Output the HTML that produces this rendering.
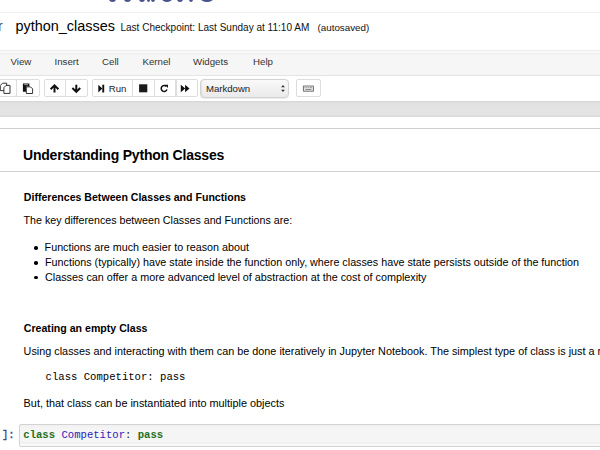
<!DOCTYPE html>
<html><head><meta charset="utf-8">
<style>
*{margin:0;padding:0;box-sizing:border-box}
html,body{width:600px;height:450px;overflow:hidden;background:#fff;font-family:"Liberation Sans",sans-serif;color:#000}
.a{position:absolute;white-space:pre;line-height:20px}
.blob{position:absolute;background:#34407f;border-radius:50%;opacity:.9}
#topline{position:absolute;left:0;top:12px;width:600px;height:1px;background:#f2f2f2}
#menubar{position:absolute;left:0;top:50px;width:600px;height:25.5px;background:#f6f6f6;border-top:1.5px solid #ebebeb;border-bottom:1.5px solid #e4e4e4;box-shadow:inset 0 2px 0 #f9f9f9,inset 0 3.5px 0 #eeeeee}
.menu{font-size:9.7px;color:#333}
.btn{position:absolute;top:79px;height:18px;border:1px solid #ddd;background:#fff}
#band{position:absolute;left:0;top:101px;width:600px;height:16px;background:linear-gradient(#d6d6d6,#e2e2e2 15%,#e4e4e4 85%,#d8d8d8)}
#line2{position:absolute;left:0;top:128px;width:600px;height:1px;background:#cfcfcf}
#line3{position:absolute;left:0;top:171px;width:600px;height:1px;background:#d0d0d0}
.body{font-size:10.75px}
.mono{font-family:"Liberation Mono",monospace;font-size:10.6px}
.bullet{position:absolute;width:3.6px;height:3.6px;border-radius:50%;background:#000}
#sel{position:absolute;left:200px;top:79.2px;width:89px;height:18.4px;border:1px solid #d2d2d2;border-radius:4px;background:linear-gradient(#f9f9f9,#eaeaea);box-shadow:inset 2px 0 2px -1px rgba(0,0,0,.07),0 0.5px 1px rgba(0,0,0,.08)}
#cell{position:absolute;left:19px;top:424.4px;width:590px;height:22.6px;background:#f5f5f5;border:1px solid #d2d2d2;border-radius:2px;box-shadow:inset 0 2.5px 0 #f2f2f2,inset 0 -2.5px 0 #f9f9f9,inset 0 -4px 0 #efefef}
</style></head><body>
<!-- logo bottoms -->
<div class="blob" style="left:109px;top:-4.3px;width:7.0px;height:6px"></div>
<div class="blob" style="left:123.5px;top:-4.3px;width:7.0px;height:6px"></div>
<div class="blob" style="left:138.5px;top:-4.3px;width:6.0px;height:6px"></div>
<div class="blob" style="left:146.5px;top:-4.3px;width:3.5px;height:6px"></div>
<div class="blob" style="left:151px;top:-4.3px;width:4.0px;height:6px"></div>
<div class="blob" style="left:162px;top:-4.3px;width:10.0px;height:6px"></div>
<div class="blob" style="left:177.3px;top:-4.3px;width:6.0px;height:6px"></div>
<div class="blob" style="left:188.7px;top:-4.3px;width:4.0px;height:6px"></div>
<div class="blob" style="left:201.3px;top:-4.3px;width:11.4px;height:6px"></div>
<div id="topline"></div>

<!-- header -->
<div class="a" style="left:-2px;top:16px;font-size:14.4px;color:#555">r</div>
<div class="a" style="left:15.6px;top:18.8px;font-size:14.42px;line-height:15px">python_classes</div>
<div class="a" style="left:120.4px;top:22.5px;font-size:10.04px;line-height:10px;color:#111">Last Checkpoint: Last Sunday at 11:10 AM</div>
<div class="a" style="left:317.5px;top:22.5px;font-size:9.8px;line-height:10px;color:#111">(autosaved)</div>

<!-- menubar -->
<div id="menubar"></div>
<div class="a menu" style="left:10.5px;top:57.3px;line-height:10px">View</div>
<div class="a menu" style="left:54.5px;top:57.3px;line-height:10px">Insert</div>
<div class="a menu" style="left:102px;top:57.3px;line-height:10px">Cell</div>
<div class="a menu" style="left:142.5px;top:57.3px;line-height:10px">Kernel</div>
<div class="a menu" style="left:193px;top:57.3px;line-height:10px">Widgets</div>
<div class="a menu" style="left:253px;top:57.3px;line-height:10px">Help</div>

<!-- toolbar -->
<div id="toolbar">
<div class="btn" style="left:-5px;width:22px;border-radius:0 2px 2px 0"></div>
<div class="btn" style="left:16px;width:24px;border-radius:0 2px 2px 0"></div>
<div class="btn" style="left:43.5px;width:22.5px;border-radius:2px 0 0 2px"></div>
<div class="btn" style="left:65px;width:23px;border-radius:0 2px 2px 0"></div>
<div class="btn" style="left:91.6px;width:41.5px;border-radius:2px 0 0 2px"></div>
<div class="btn" style="left:132.3px;width:22.3px"></div>
<div class="btn" style="left:153.9px;width:22.3px"></div>
<div class="btn" style="left:175.5px;width:22.3px;border-radius:0 2px 2px 0"></div>
<div id="sel"></div>
<div class="btn" style="left:296px;width:24.5px;border-radius:2px"></div>
<svg style="position:absolute;left:0;top:0" width="600" height="100" viewBox="0 0 600 100">
 <g fill="#fff" stroke="#333" stroke-width="1" stroke-linejoin="round">
  <path d="M0.3 85.5 L2.6 83.2 L6.7 83.2 L6.7 90.6 L0.3 90.6 Z"/>
  <path d="M3.9 87.6 L6.0 85.4 L10.0 85.4 L10.0 93.4 L3.9 93.4 Z"/>
 </g>
 <path d="M22.9 83.6 L29.4 83.6 L29.4 86.6 L26.2 86.6 L26.2 91.8 L22.9 91.8 Z" fill="#111"/>
 <path d="M26.3 86.9 L30.6 86.9 L32.6 88.9 L32.6 93.5 L26.3 93.5 Z" fill="#fff" stroke="#333" stroke-width="1" stroke-linejoin="round"/>
 <rect x="24.2" y="83.6" width="4" height="1.6" fill="#888"/>
 <path d="M54.5 92.5 L54.5 86.3 M50.6 89.2 L54.5 85.3 L58.4 89.2" fill="none" stroke="#111" stroke-width="2"/>
 <path d="M76.3 84.7 L76.3 90.9 M72.4 88 L76.3 91.9 L80.2 88" fill="none" stroke="#111" stroke-width="2"/>
 <path d="M98.3 84.7 L102.3 88.6 L98.3 92.5 Z" fill="#111"/>
 <rect x="102.3" y="84.7" width="1.9" height="7.8" fill="#111"/>
 <rect x="139.1" y="84.3" width="8.2" height="8" fill="#1a1a1a"/>
 <path d="M166.3 86.4 A3.0 3.0 0 1 0 167.0 89.6" fill="none" stroke="#111" stroke-width="1.5"/>
 <path d="M164.7 84.8 L168 84.8 L168 88.1 Z" fill="#111"/>
 <path d="M180.8 84.8 L185.2 88.5 L180.8 92.3 Z M185.1 84.8 L189.5 88.5 L185.1 92.3 Z" fill="#111"/>
 <rect x="302.9" y="85.4" width="11.1" height="6.4" rx="0.8" fill="#7a7a7a"/>
 <rect x="304" y="86.5" width="8.9" height="4.2" fill="#e8e8e8"/>
 <path d="M304.6 87.7 h1 M306.4 87.7 h1 M308.2 87.7 h1 M310 87.7 h1.8 M305.5 89.5 h5.8" stroke="#8a8a8a" stroke-width="1"/>
 <path d="M283 85 L284.9 87.3 L281.1 87.3 Z M283 92 L284.9 89.7 L281.1 89.7 Z" fill="#333"/>
</svg>
<div class="a" style="left:108.8px;top:83.6px;font-size:9.6px;line-height:10px;color:#222">Run</div>
<div class="a" style="left:205.9px;top:83.5px;font-size:9.6px;line-height:10px;color:#222">Markdown</div>
</div>

<div id="band"></div>
<div id="line2"></div>

<!-- content -->
<div class="a" style="left:23px;top:148.3px;font-size:14px;letter-spacing:-0.21px;font-weight:bold;line-height:14px">Understanding Python Classes</div>
<div id="line3"></div>
<div class="a" style="left:23.8px;top:192.3px;font-size:10.59px;font-weight:bold;line-height:11px">Differences Between Classes and Functions</div>
<div class="a body" style="left:23.6px;top:215px;font-size:10.68px;line-height:11px">The key differences between Classes and Functions are:</div>
<div class="bullet" style="left:34px;top:246.2px"></div>
<div class="bullet" style="left:34px;top:261.2px"></div>
<div class="bullet" style="left:34px;top:275.8px"></div>
<div class="a body" style="left:44.6px;top:241.5px;line-height:11px">Functions are much easier to reason about</div>
<div class="a body" style="left:45px;top:256.5px;line-height:11px">Functions (typically) have state inside the function only, where classes have state persists outside of the function</div>
<div class="a body" style="left:45px;top:271.5px;font-size:10.81px;line-height:11px">Classes can offer a more advanced level of abstraction at the cost of complexity</div>
<div class="a" style="left:23.8px;top:322.5px;font-size:10.6px;font-weight:bold;line-height:11px">Creating an empty Class</div>
<div class="a body" style="left:23.6px;top:345.5px;font-size:10.84px;line-height:11px">Using classes and interacting with them can be done iteratively in Jupyter Notebook. The simplest type of class is just a regular</div>
<div class="a mono" style="left:45.6px;top:372.2px;line-height:11px">class Competitor: pass</div>
<div class="a body" style="left:23.6px;top:397.9px;font-size:10.87px;line-height:11px">But, that class can be instantiated into multiple objects</div>

<!-- code cell -->
<div class="a mono" style="left:2px;top:430.4px;line-height:11px;color:#3a3f80;-webkit-text-stroke:0.3px #3a3f80">]:</div>
<div id="cell"></div>
<div class="a mono" style="left:23.3px;top:430.4px;line-height:11px"><b style="color:#1d701d">class</b> <span style="color:#2f22b8">Competitor</span><span style="color:#222">:</span> <b style="color:#1d701d">pass</b></div>
</body></html>
